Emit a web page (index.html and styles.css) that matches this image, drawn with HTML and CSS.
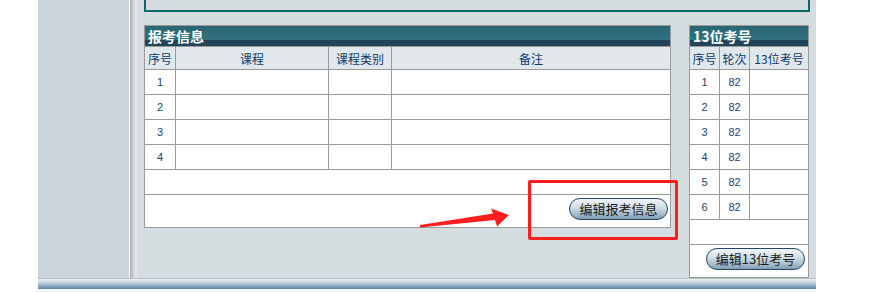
FILE: index.html
```html
<!DOCTYPE html>
<html lang="zh-CN">
<head>
<meta charset="utf-8">
<title>报考信息</title>
<link rel="stylesheet" href="styles.css">
</head>
<body>
<div class="frame">
  <div class="sidebar"></div>
  <div class="divider"></div>
  <div class="content">
    <div class="topbox"></div>
    <div class="tables">
      <div class="grid grid-left">
        <div class="title">报考信息</div>
        <div class="th">序号</div><div class="th">课程</div><div class="th">课程类别</div><div class="th">备注</div>
        <div class="td num">1</div><div class="td"></div><div class="td"></div><div class="td"></div>
        <div class="td num">2</div><div class="td"></div><div class="td"></div><div class="td"></div>
        <div class="td num">3</div><div class="td"></div><div class="td"></div><div class="td"></div>
        <div class="td num">4</div><div class="td"></div><div class="td"></div><div class="td"></div>
        <div class="td span"></div>
        <div class="td span btn-row"><button class="btn btn-left" type="button">编辑报考信息</button></div>
      </div>
      <div class="grid grid-right">
        <div class="title">13位考号</div>
        <div class="th">序号</div><div class="th">轮次</div><div class="th">13位考号</div>
        <div class="td num">1</div><div class="td num">82</div><div class="td"></div>
        <div class="td num">2</div><div class="td num">82</div><div class="td"></div>
        <div class="td num">3</div><div class="td num">82</div><div class="td"></div>
        <div class="td num">4</div><div class="td num">82</div><div class="td"></div>
        <div class="td num">5</div><div class="td num">82</div><div class="td"></div>
        <div class="td num">6</div><div class="td num">82</div><div class="td"></div>
        <div class="td span"></div>
        <div class="td span btn-row"><button class="btn btn-right" type="button">编辑13位考号</button></div>
      </div>
    </div>
  </div>
</div>
<div class="footer-bar"></div>
<div class="footer-under"></div>

<div class="highlight"></div>
<svg class="arrow" width="100" height="24" viewBox="415 206 100 24" xmlns="http://www.w3.org/2000/svg">
  <polygon points="420,225 493,213.5 491,208.5 509,215 497,226.5 495,220 420,227.5" fill="#ff1e1e"/>
</svg>
</body>
</html>
```

FILE: styles.css
```css
html, body {
  margin: 0;
  padding: 0;
  background: #ffffff;
}
body {
  width: 876px;
  height: 292px;
  overflow: hidden;
  position: relative;
  font-family: "Noto Sans CJK SC", "Liberation Sans", sans-serif;
}
.frame {
  margin-left: 38px;
  width: 778px;
  height: 278px;
  display: flex;
}
.sidebar {
  width: 91px;
  background: #c9d5da;
}
.divider {
  width: 8px;
  background: linear-gradient(to right, #ffffff 0, #ffffff 1px, #a6abb0 1px, #bfc4c8 3px, #dde1e4 6px, #e4e8ea 8px);
}
.content {
  flex: 1;
  background: #d5dde0;
  padding-left: 7px;
}
.topbox {
  width: 666px;
  height: 12px;
  box-sizing: border-box;
  border: 2px solid #0b6868;
  border-top: 0;
}
.tables {
  display: flex;
  align-items: flex-start;
  gap: 18px;
  margin-top: 13px;
}
.grid {
  display: grid;
  gap: 1px;
  background: #9a9a9a;
  border: 1px solid #9a9a9a;
}
.grid-left {
  grid-template-columns: 30px 152px 62px 278px;
  grid-template-rows: 20px 22px repeat(4, 24px) 24px 32px;
}
.grid-right {
  grid-template-columns: 29px 29px 58px;
  grid-template-rows: 20px 22px repeat(6, 24px) 24px 32px;
}
.title {
  grid-column: 1 / -1;
  background: linear-gradient(to bottom, #2b6574 0, #30727f 13px, #2f6f7d 14px, #23455a 14px, #23455a 20px);
  color: #ffffff;
  font-weight: bold;
  font-size: 14px;
  line-height: 20px;
  padding-left: 3px;
  white-space: nowrap;
}
.th {
  background: #e2e7eb;
  color: #0d3a6e;
  font-size: 12px;
  display: flex;
  align-items: center;
  justify-content: center;
  white-space: nowrap;
}
.td {
  background: #ffffff;
  display: flex;
  align-items: center;
  justify-content: center;
}
.num {
  font-family: "Liberation Sans", "DejaVu Sans", sans-serif;
  font-size: 11px;
  color: #1d3f70;
}
.span {
  grid-column: 1 / -1;
}
.btn-row {
  align-items: flex-start;
  justify-content: flex-end;
  padding-top: 3px;
}
.btn-left {
  margin-right: 2px;
}
.btn-right {
  margin-right: 3px;
}
.btn {
  width: 99px;
  height: 22px;
  padding: 0;
  border: 1px solid #23466a;
  border-radius: 11px;
  background: linear-gradient(to bottom, #f1f5f8 0%, #d4dfe7 40%, #a9bfcd 75%, #7f9db2 100%);
  color: #1a1a1a;
  font-family: "Noto Sans CJK SC", "Liberation Sans", sans-serif;
  font-size: 13px;
  line-height: 20px;
  white-space: nowrap;
  box-sizing: border-box;
}
.footer-bar {
  margin-left: 38px;
  width: 778px;
  height: 11px;
  background: linear-gradient(to bottom, #b4bec4 0, #b4bec4 1px, #eef3f6 1px, #cbd9e2 4px, #9bb5c6 7px, #6b8fa8 10px, #5c84a0 11px);
}
.footer-under {
  margin-left: 38px;
  width: 778px;
  height: 3px;
  background: #f3f5f6;
}
.highlight {
  position: absolute;
  left: 528px;
  top: 180px;
  width: 150px;
  height: 60px;
  box-sizing: border-box;
  border: 3px solid #ff1e1e;
  border-radius: 2px;
}
.arrow {
  position: absolute;
  left: 415px;
  top: 206px;
}
```
